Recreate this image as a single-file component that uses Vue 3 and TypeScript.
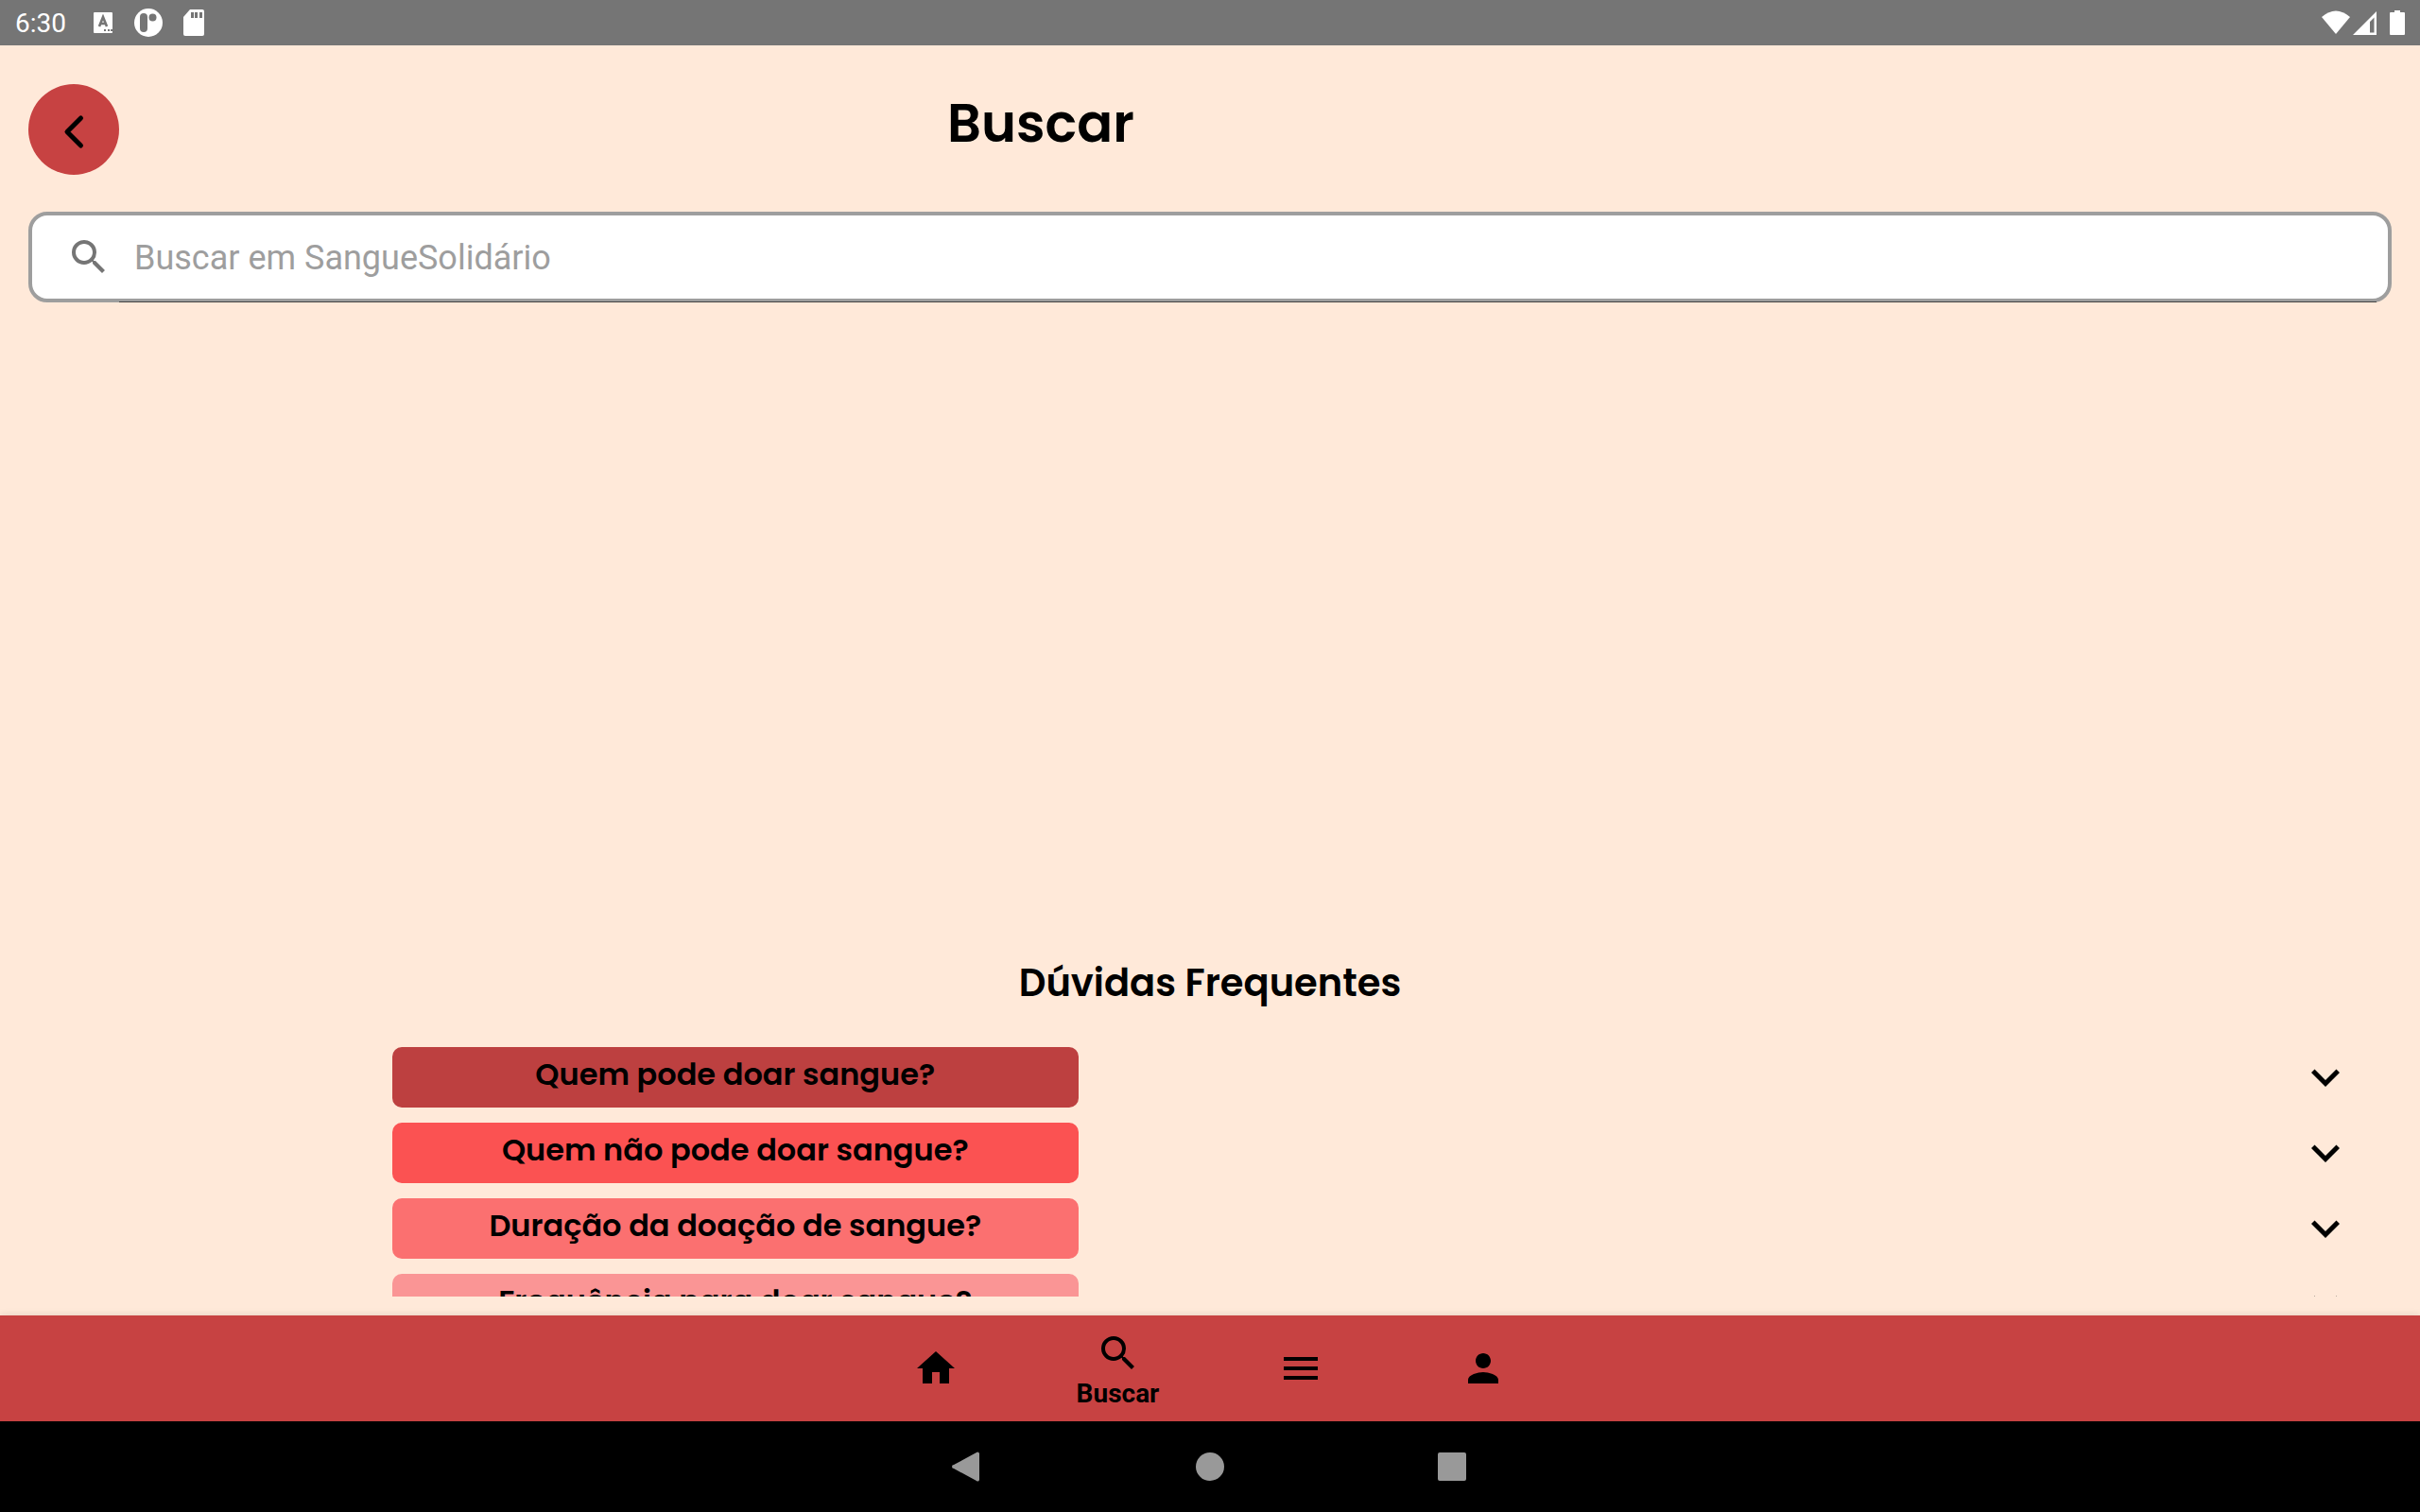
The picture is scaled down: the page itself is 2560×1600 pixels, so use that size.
<script setup lang="ts">
import { ref } from 'vue'

interface Faq {
  question: string
  color: string
}

interface Tab {
  id: string
  label: string
  path: string
}

const query = ref('')
const activeTab = ref('search')

const faqs: Faq[] = [
  { question: 'Quem pode doar sangue?', color: '#bd4040' },
  { question: 'Quem não pode doar sangue?', color: '#fb5252' },
  { question: 'Duração da doação de sangue?', color: '#fb7070' },
  { question: 'Frequência para doar sangue?', color: '#fa9595' },
]

const searchPath =
  'M15.5 14h-.79l-.28-.27A6.47 6.47 0 0 0 16 9.5 6.5 6.5 0 1 0 9.5 16c1.61 0 3.09-.59 4.23-1.57l.27.28v.79l5 4.99L20.49 19l-4.99-5zm-6 0C7.01 14 5 11.99 5 9.5S7.01 5 9.5 5 14 7.01 14 9.5 11.99 14 9.5 14z'

const tabs: Tab[] = [
  { id: 'home', label: 'Início', path: 'M10 20v-6h4v6h5v-8h3L12 3 2 12h3v8z' },
  { id: 'search', label: 'Buscar', path: searchPath },
  { id: 'menu', label: 'Menu', path: 'M3 18h18v-2H3v2zm0-5h18v-2H3v2zm0-7v2h18V6H3z' },
  {
    id: 'profile',
    label: 'Perfil',
    path: 'M12 12c2.21 0 4-1.79 4-4s-1.79-4-4-4-4 1.79-4 4 1.79 4 4 4zm0 2c-2.67 0-8 1.34-8 4v2h16v-2c0-2.66-5.33-4-8-4z',
  },
]
</script>

<template>
  <div class="screen">
    <div class="status">
      <div class="status-group">
        <span class="clock">6:30</span>
        <svg class="notices" viewBox="0 0 124 32" aria-hidden="true">
          <rect x="5" y="5" width="20" height="22" rx="1" fill="#fff" />
          <path d="M11 20l4-10 4 10M12 17h6" fill="none" stroke="#757575" stroke-width="2.6" />
          <path d="M15 22h10v4H15z" fill="#fff" />
          <path d="M16 23h2v2h-2zm4 0h2v2h-2zm3 0h2v2h-2z" fill="#757575" />
          <circle cx="63" cy="16" r="15" fill="#fff" />
          <rect x="54" y="6" width="8" height="20" rx="4" fill="#757575" />
          <circle cx="67.500" cy="10.500" r="4" fill="#757575" />
          <path d="M107 2h13a2 2 0 0 1 2 2v24a2 2 0 0 1-2 2h-18a2 2 0 0 1-2-2V10z" fill="#fff" />
          <path d="M108 5h3v6h-3zm4 0h3v6h-3zm5 0h3v6h-3z" fill="#757575" />
        </svg>
      </div>
      <svg class="signals" viewBox="0 0 88 32" aria-hidden="true">
        <path d="M0 10Q15-3 30 10L15 28z" fill="#fff" />
        <path d="M58 4v25H33zM55.500 10.500l-4.500 4.500v11.500h4.500z" fill="#fff" fill-rule="evenodd" />
        <path d="M77 3h6v2h4a1 1 0 0 1 1 1v22a1 1 0 0 1-1 1H73a1 1 0 0 1-1-1V6a1 1 0 0 1 1-1h4z" fill="#fff" />
      </svg>
    </div>

    <header class="header">
      <button class="back" type="button" aria-label="Voltar">
        <svg viewBox="0 0 96 96" aria-hidden="true">
          <path d="M55.500 36L41 50.500l14.500 14.500" fill="none" stroke="#000" stroke-width="5" stroke-linecap="round" stroke-linejoin="round" />
        </svg>
      </button>
      <h1 class="title">Buscar</h1>
    </header>

    <label class="search">
      <svg class="icon search-icon" viewBox="0 0 24 24" aria-hidden="true">
        <path :d="searchPath" />
      </svg>
      <input v-model="query" class="search-input" type="text" placeholder="Buscar em SangueSolidário" aria-label="Buscar em SangueSolidário" />
    </label>

    <section class="faq">
      <h2 class="faq-title">Dúvidas Frequentes</h2>
      <ul class="faq-list">
        <li v-for="item in faqs" :key="item.question" class="faq-row">
          <button class="question" type="button" :style="{ backgroundColor: item.color }">{{ item.question }}</button>
          <svg class="chevron" viewBox="0 0 24 24" aria-hidden="true">
            <path d="M7.410 8.590L12 13.170l4.590-4.580L18 10l-6 6-6-6z" />
          </svg>
        </li>
      </ul>
    </section>

    <nav class="tabs">
      <button v-for="tab in tabs" :key="tab.id" class="tab" type="button" :aria-label="tab.label" @click="activeTab = tab.id">
        <svg class="icon" viewBox="0 0 24 24" aria-hidden="true"><path :d="tab.path" /></svg>
        <span v-if="tab.id === activeTab" class="tab-label">{{ tab.label }}</span>
      </button>
    </nav>

    <div class="system">
      <button class="system-key" type="button" aria-label="Voltar">
        <svg viewBox="0 0 48 48" aria-hidden="true"><path d="M33 9a2 2 0 0 1 3 1v28a2 2 0 0 1-3 1L9 26a2 2 0 0 1 0-4z" /></svg>
      </button>
      <button class="system-key" type="button" aria-label="Tela inicial">
        <svg viewBox="0 0 48 48" aria-hidden="true"><circle cx="24" cy="24" r="15" /></svg>
      </button>
      <button class="system-key" type="button" aria-label="Recentes">
        <svg viewBox="0 0 48 48" aria-hidden="true"><rect x="9" y="9" width="30" height="30" rx="2" /></svg>
      </button>
    </div>
  </div>
</template>

<style>
body {
  margin: 0;
  background: #ffe9d9;
}
</style>

<style scoped>
.screen {
  display: flex;
  flex-direction: column;
  min-height: 100vh;
  background: #ffe9d9;
  color: #000;
  font-family: Roboto, sans-serif;
}

button {
  padding: 0;
  border: 0;
  background: none;
  color: inherit;
  font: inherit;
  cursor: pointer;
}

.status {
  display: flex;
  align-items: center;
  justify-content: space-between;
  height: 48px;
  padding: 0 16px;
  background: #757575;
}

.status-group {
  display: flex;
  align-items: center;
  gap: 24px;
}

.clock {
  color: #fff;
  font-size: 28px;
  line-height: 48px;
  padding-top: 2px;
}

.notices {
  width: 124px;
  height: 32px;
}

.signals {
  width: 88px;
  height: 32px;
}

.header {
  display: grid;
  grid-template-columns: 96px 1950fr 454fr;
  margin: 41px 30px 0;
}

.back {
  width: 96px;
  height: 96px;
  border-radius: 50%;
  background: #c74242;
}

.back svg {
  display: block;
}

.title {
  margin: 0;
  font-family: Poppins, Inter, sans-serif;
  font-size: 56px;
  font-weight: 600;
  line-height: 84px;
  text-align: center;
}

.search {
  display: flex;
  align-items: center;
  box-sizing: border-box;
  height: 96px;
  margin: 39px 30px 0;
  padding: 0 12px 0 36px;
  border: 4px solid #9e9e9e;
  border-radius: 20px;
  background: #fff;
}

.icon {
  width: 48px;
  height: 48px;
}

.search-icon {
  flex: none;
  fill: #757575;
}

.search-input {
  position: relative;
  flex: 1;
  box-sizing: border-box;
  min-width: 0;
  height: 92px;
  margin: 0 0 -4px 8px;
  padding: 0 0 2px 16px;
  border: 0;
  border-bottom: 1px solid #444;
  outline: 0;
  background: none;
  font-family: Roboto, sans-serif;
  font-size: 36px;
}

.search-input::placeholder {
  color: #9e9e9e;
  opacity: 1;
}

.faq {
  margin-top: auto;
  padding-bottom: 20px;
}

.faq-title {
  margin: 0 0 38px;
  font-family: Poppins, Inter, sans-serif;
  font-size: 40px;
  font-weight: 600;
  line-height: 60px;
  text-align: center;
}

.faq-list {
  display: flex;
  flex-direction: column;
  gap: 16px;
  height: 264px;
  margin: 0;
  padding: 0;
  overflow: hidden;
  list-style: none;
}

.faq-row {
  display: grid;
  flex: none;
  grid-template-columns: 726fr 1419fr;
  align-items: center;
  height: 64px;
  padding-left: 16.2%;
}

.question {
  height: 64px;
  padding-bottom: 6px;
  border-radius: 10px;
  font-family: Poppins, Inter, sans-serif;
  font-size: 32px;
  font-weight: 600;
}

.chevron {
  justify-self: end;
  width: 60px;
  height: 60px;
  margin-right: 70px;
}

.tabs {
  display: flex;
  justify-content: center;
  height: 112px;
  padding-right: 2px;
  background: #c74242;
  box-shadow: 0 0 8px rgba(0, 0, 0, 0.12);
}

.tab {
  display: flex;
  flex-direction: column;
  align-items: center;
  justify-content: center;
  width: 193px;
}

.tab-label {
  margin-bottom: -4px;
  padding-top: 2px;
  font-size: 28px;
  font-weight: 700;
  line-height: 34px;
}

.system {
  position: relative;
  display: flex;
  align-items: center;
  justify-content: center;
  height: 96px;
  background: #000;
}

.system-key {
  width: 256px;
  height: 96px;
}

.system-key svg {
  display: block;
  width: 48px;
  height: 48px;
  margin: 0 auto;
  fill: #999;
}
</style>
